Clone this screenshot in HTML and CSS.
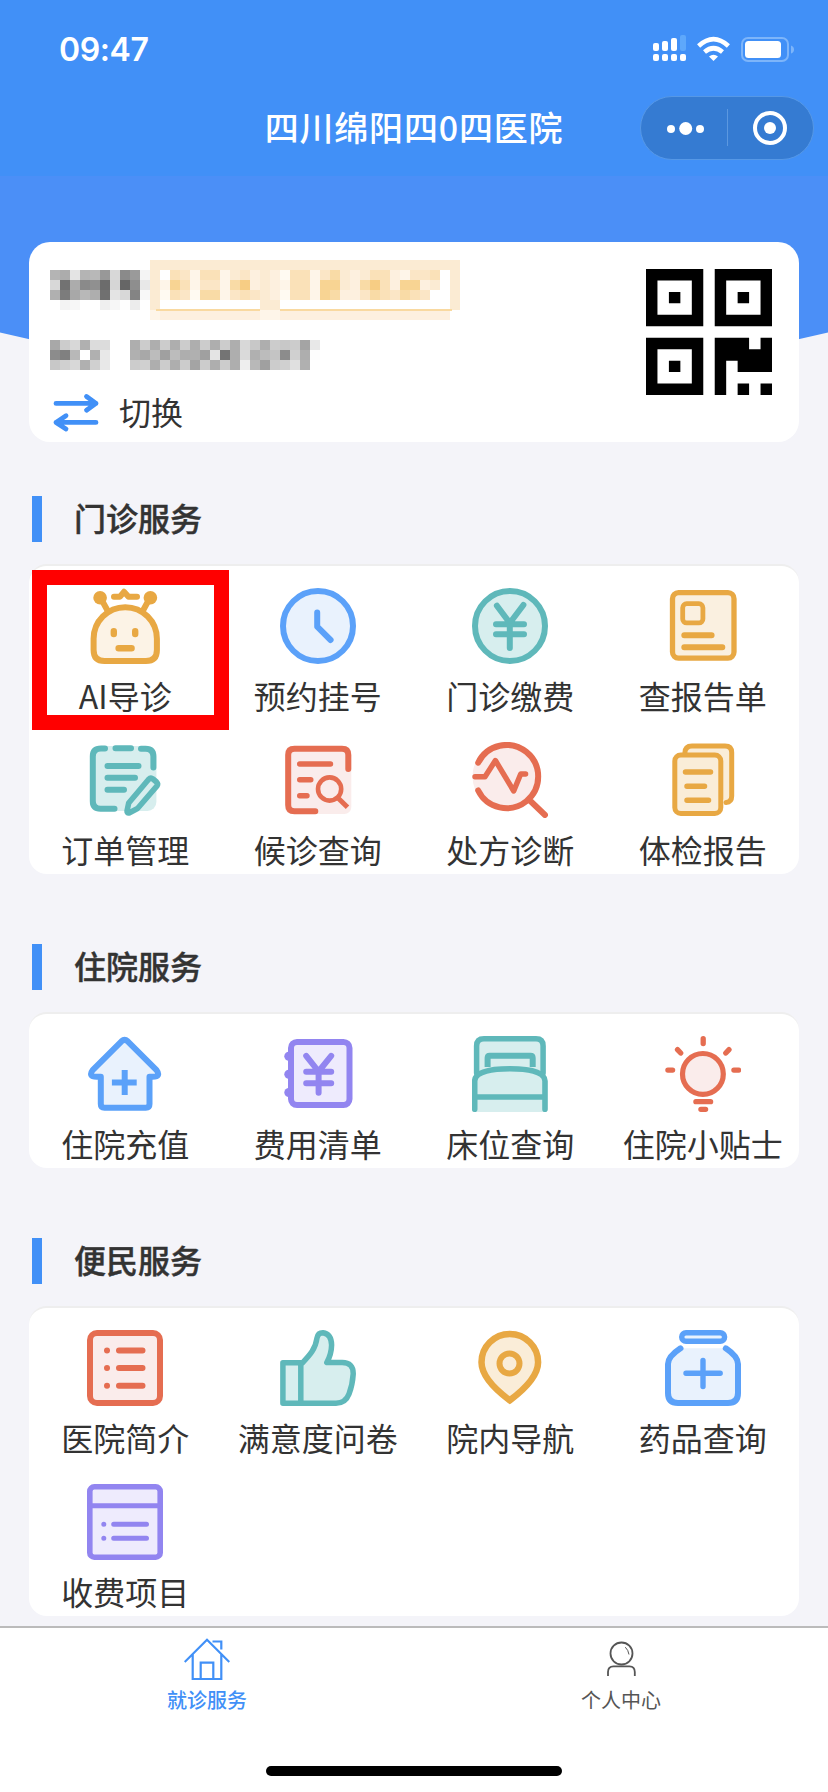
FILE: index.html
```html
<!DOCTYPE html>
<html lang="zh-CN">
<head>
<meta charset="utf-8">
<title>四川绵阳四0四医院</title>
<link rel="stylesheet" href="styles.css">
</head>
<body>
<div class="page">
  <header class="header">
    <div class="status-bar">
      <span class="time">09:47</span>
      <svg class="status-icons" width="142" height="28" viewBox="0 0 142 28">
        <g fill="#fff">
          <rect x="0" y="8" width="6" height="8" rx="2"/><rect x="9" y="6" width="6" height="10" rx="2"/><rect x="18" y="3" width="6" height="13" rx="2"/>
          <rect x="27" y="0" width="6" height="16" rx="2" fill="#5ea8fb"/>
          <rect x="0" y="19" width="6" height="7" rx="2"/><rect x="9" y="19" width="6" height="7" rx="2"/><rect x="18" y="19" width="6" height="7" rx="2"/><rect x="27" y="19" width="6" height="7" rx="2"/>
          <path d="M60.500 26 L56 21.500 Q60.500 18 65 21.500Z"/>
          <rect x="92" y="6" width="36" height="17" rx="3.500"/>
        </g>
        <g fill="none" stroke="#fff" stroke-width="4.600">
          <path d="M45.600 11 Q60.500 -2.600 75.400 11"/>
          <path d="M51.500 17 Q60.500 9.500 69.500 17"/>
        </g>
        <rect x="89" y="3" width="46" height="23" rx="6" fill="none" stroke="#7db5fa" stroke-width="2"/>
        <path d="M138 10.500 Q141 11.500 141 14.500 T138 18.500Z" fill="#7db5fa"/>
      </svg>
    </div>
    <div class="nav-bar">
      <h1 class="title">四川绵阳四0四医院</h1>
      <div class="capsule">
        <svg width="172" height="62" viewBox="0 0 172 62">
          <g fill="#fff"><circle cx="30" cy="32" r="4"/><circle cx="44.700" cy="31.500" r="6.500"/><circle cx="59" cy="32" r="4"/><circle cx="129" cy="31" r="6"/></g>
          <path d="M86.500 12V49" stroke="#5c98e0"/>
          <circle cx="129" cy="31" r="15" fill="none" stroke="#fff" stroke-width="4"/>
        </svg>
      </div>
    </div>
  </header>

  <section class="hero">
    <svg class="hero-bg" width="828" height="210" viewBox="0 0 828 210"><path d="M0 0H828V156.500Q414 255 0 156.500Z" fill="#4b8ff7"/></svg>
    <div class="patient">
      <div class="patient-info">
        <svg class="mosaic" id="mosaic" width="420" height="120" viewBox="0 0 420 120" shape-rendering="crispEdges"></svg>
        <div class="switch">
          <svg width="48" height="40" viewBox="0 0 48 40" fill="none" stroke="#4190f7" stroke-width="4.800" stroke-linecap="round" stroke-linejoin="round"><path d="M4 10.400H44M34.500 3.500L44 10.400L34.500 17.200M44 29.400H4M14 22.700L4 29.400L14 36"/></svg>
          <span>切换</span>
        </div>
      </div>
      <svg class="qr" width="126" height="126" viewBox="0 0 11 11">
        <path fill-rule="evenodd" d="M0 0H5V5H0ZM1 1V4H4V1ZM2 2H3V3H2ZM6 0H11V5H6ZM7 1V4H10V1ZM8 2H9V3H8ZM0 6H5V11H0ZM1 7V10H4V7ZM2 8H3V9H2ZM6 6H9V7H10V6H11V9H8V8H7V11H6ZM8 10H9V11H8ZM10 10H11V11H10Z"/>
      </svg>
    </div>
  </section>

  <main class="content">
    <section class="section">
      <h2 class="section-title">门诊服务</h2>
      <div class="grid">
        <a class="item">
          <svg class="icon orange" viewBox="0 0 76 76">
            <path fill="#fcf3e6" d="M6.600 50.800a31.650 31.650 0 0 1 63.300 0V62q0 11-11 11H17.600q-11 0-11-11z"/>
            <path d="M15 12.500L20.500 22.500M61.500 12.500L56 22.500M27 8.700H33L37 3.800L41.500 8.700H50" stroke-width="6"/>
            <g class="solid"><circle cx="13.100" cy="9.700" r="6.800"/><circle cx="63.400" cy="9.700" r="6.800"/></g>
            <path d="M26.800 43.200V46M48.200 43.200V46M31.600 60.300H44.600" stroke-width="6.400"/>
          </svg><span>AI导诊</span><div class="highlight"></div></a>
        <a class="item">
          <svg class="icon blue" viewBox="0 0 76 76"><circle class="tint" cx="38" cy="38" r="35"/><path d="M37.200 24.500V38.700L50.600 52"/></svg><span>预约挂号</span></a>
        <a class="item">
          <svg class="icon teal" viewBox="0 0 76 76"><circle class="tint" cx="38" cy="38" r="35"/><path d="M24.900 17.700L37.800 35L51.400 17M37.800 35V60M24 36.300H52M24 46.300H52"/></svg><span>门诊缴费</span></a>
        <a class="item">
          <svg class="icon orange" viewBox="0 0 76 76"><rect class="tint" x="7.500" y="4.700" width="61.500" height="65.400" rx="6" stroke-width="5.300"/><rect x="17.700" y="15.700" width="20.200" height="19.200" rx="4" stroke-width="4.800"/><path d="M19.300 47.300H46.600M19.300 59.300H57.300"/></svg><span>查报告单</span></a>
        <a class="item">
          <svg class="icon teal" viewBox="0 0 76 76"><rect class="tint bare" x="3" y="4" width="66.400" height="65" rx="9"/><path d="M18 6.600H14Q5.800 6.600 5.800 14.500V59Q5.800 66.700 13.500 66.700H27.500M28.500 6.300H44M54 6.700H58.500Q66.400 6.700 66.400 14.500V25.500M20.500 24H51.500M20.500 35.700H48M20.500 47.700H37"/><path class="tint" stroke-width="5.600" d="M41.700 61L61.500 37.500Q63.700 35.200 66 37L69.500 40Q71.500 42 69.800 44.200L50.500 66.500L42.500 70.800Q39.800 71.800 40 69Z"/></svg><span>订单管理</span></a>
        <a class="item">
          <svg class="icon red" viewBox="0 0 76 76"><rect class="tint bare" x="5" y="4" width="66.300" height="68" rx="7"/><path d="M68.300 27V13Q68.300 6.700 62 6.700H14.500Q8.200 6.700 8.200 13V63Q8.200 69.300 14.500 69.300H35.300"/><path stroke-width="5.400" d="M19.700 22H50.500M19.700 37.700H30.800M19.700 53.700H27"/><circle cx="49.600" cy="47" r="11.600" stroke-width="4.600"/><path d="M57.500 55.500L67.500 65.300" stroke-width="5" stroke-linecap="butt"/></svg><span>候诊查询</span></a>
        <a class="item">
          <svg class="icon red" viewBox="0 0 76 76"><circle class="tint bare" cx="34.800" cy="34.500" r="34.300"/><path d="M6.200 20.700A31.600 31.600 0 1 1 6.200 48.500M58.400 59L73 73"/><path stroke-width="5.400" d="M3 34.700H13L23.400 18.500L41.700 49L48.700 32H53.600"/></svg><span>处方诊断</span></a>
        <a class="item">
          <svg class="icon orange" viewBox="0 0 76 76"><path stroke-width="5" fill="#faedd8" d="M19.900 13V11Q19.900 3.900 27 3.900H60Q66.700 3.900 66.700 10.500V54Q66.700 60 61 60.500"/><rect stroke-width="5" fill="#faedd8" x="9.800" y="12.900" width="46" height="58.500" rx="6"/><path stroke-width="5.500" d="M20.500 30H45.500M22 44.200H39.500M22 58.300H43.500"/></svg><span>体检报告</span></a>
      </div>
    </section>

    <section class="section">
      <h2 class="section-title">住院服务</h2>
      <div class="grid">
        <a class="item">
          <svg class="icon blue" viewBox="0 0 76 76"><path class="tint" d="M34.500 5.300Q37.600 2.600 40.700 5.300L69.300 33.800Q74.500 40.700 65.500 40.700H62.500V68q0 3.700-3.700 3.700H17.500q-3.700 0-3.700-3.700V40.700H9.800Q.7 40.700 5.900 33.800Z"/><path d="M37.700 34V59M24.900 46.500H49.700" stroke-linecap="butt"/></svg><span>住院充值</span></a>
        <a class="item">
          <svg class="icon purple" viewBox="0 0 76 76"><g class="solid"><circle cx="8.800" cy="20.300" r="4.500"/><circle cx="8.800" cy="38.300" r="4.500"/><circle cx="8.800" cy="56.500" r="4.500"/></g><rect class="tint" x="11" y="5.900" width="58.500" height="63.200" rx="6"/><path d="M26.200 19.900L38.600 35.500L51.200 19.900M38.600 35.500V56.800M26.200 35.700H51.200M26.200 47.300H51.200"/></svg><span>费用清单</span></a>
        <a class="item">
          <svg class="icon teal" viewBox="0 0 76 76"><path class="tint" stroke-width="5.500" d="M4.600 37V10Q4.600 2.800 12 2.800H64Q71.100 2.800 71.100 10V37"/><path d="M15.600 31V22Q15.600 19.800 17.800 19.800H58.500Q60.700 19.800 60.700 22V31" stroke-linecap="butt"/><path class="tint bare" d="M3 76V44Q8 33 38 33T73 44V76Z"/><path stroke-width="5.600" d="M2.700 73.200V45C3 35 22 32.800 37.900 32.800S72.800 35 73 45V73.200M3 61H73"/></svg><span>床位查询</span></a>
        <a class="item">
          <svg class="icon red" viewBox="0 0 76 76"><circle class="tint" cx="37.900" cy="37.900" r="20.400" stroke-width="5.200"/><path stroke-width="5.300" d="M38.200 2.700V7.500M2.900 34.100H7.600M68.900 34.100H73.600M12.500 13.600L15.700 17M64 13.600L60.800 17M30.900 65.700H45.600M35.900 73.300H40.600"/></svg><span>住院小贴士</span></a>
      </div>
    </section>

    <section class="section">
      <h2 class="section-title">便民服务</h2>
      <div class="grid">
        <a class="item">
          <svg class="icon red" viewBox="0 0 76 76"><rect class="tint" x="3" y="3" width="70" height="70" rx="7"/><path d="M20 20.400H20.010M20 38H20.010M20 55.700H20.010M32 20.400H55.500M32 38H55.500M32 55.700H55.500"/></svg><span>医院简介</span></a>
        <a class="item">
          <svg class="icon teal" viewBox="0 0 76 76"><path class="tint" stroke-width="5.500" d="M2.900 73.200V32.800H22.500C30 25 35.500 19 37 8Q38 2.700 43 2.800Q51.300 4 51.600 15Q51.500 24 46.800 32.600H62Q73.500 32.500 73.200 44Q72.500 55 69 64Q65.500 73.200 56 73.200ZM20.800 33V73"/></svg><span>满意度问卷</span></a>
        <a class="item">
          <svg class="icon orange" viewBox="0 0 76 76"><path fill="#faedd8" stroke-linejoin="miter" stroke-width="6.500" d="M37.800 70.300C20 57 9.500 45 9.500 32.200a28.300 28.300 0 0 1 56.600 0C66.100 45 55.500 57 37.800 70.300z"/><circle cx="37.500" cy="33.500" r="10"/></svg><span>院内导航</span></a>
        <a class="item">
          <svg class="icon blue" viewBox="0 0 76 76"><path class="tint" d="M15.500 18.300Q3 26.500 3 34V63q0 10 10 10H63q10 0 10-10V34Q73 26.500 60.800 18.300"/><rect class="tint" x="16.700" y="2.700" width="42.900" height="8.600" rx="4.300" stroke-width="5.400"/><path stroke-width="5.400" d="M38 30.500V56.500M21 43.200H55.200"/></svg><span>药品查询</span></a>
        <a class="item">
          <svg class="icon purple" viewBox="0 0 76 76"><rect class="tint" x="2.800" y="2.800" width="70.400" height="70.400" rx="4.500" stroke-width="5.600"/><path stroke-width="5" d="M3 21.700H73M16.800 40.200H16.810M16.800 54.200H16.810M26.700 40.200H59.500M26.700 54.200H59.500"/></svg><span>收费项目</span></a>
      </div>
    </section>
  </main>

  <footer class="footer">
    <nav class="tabs">
      <a class="tab active">
        <svg width="46" height="46" viewBox="0 0 46 46" fill="none" stroke="currentColor" stroke-width="2.200"><path d="M.7 25L23 2.800L45.300 25M8.700 17.500V42H37.300V17.500M16.700 41V25.700H29.300V41M28.500 4.500H37.300V12.500"/></svg>
        <span>就诊服务</span>
      </a>
      <a class="tab">
        <svg width="46" height="46" viewBox="0 0 46 46" fill="none" stroke="currentColor" stroke-width="1.800"><circle cx="23.500" cy="16.500" r="11"/><path d="M10 39V35Q10 29.300 15.500 29.300H31.500Q36.800 29.300 36.800 35V39"/><path d="M27.300 10.200Q30.300 13 31 17.500" stroke-width="1"/></svg>
        <span>个人中心</span>
      </a>
    </nav>
    <div class="home-indicator"></div>
  </footer>
</div>
<script src="mosaic.js"></script>
</body>
</html>
```
FILE: styles.css
```css
* { box-sizing: border-box; }

body {
  margin: 0;
  background: #f4f4f9;
  color: #333;
  font-family: "Noto Sans CJK SC", sans-serif;
}

svg { display: block; flex: none; }

.page {
  display: flex;
  flex-direction: column;
  width: 828px;
  height: 1792px;
  overflow: hidden;
}

.header {
  height: 176px;
  background: #4190f7;
  color: #fff;
}

.status-bar {
  display: flex;
  justify-content: space-between;
  align-items: flex-start;
  height: 96px;
  padding: 35px 33px 0 59px;
}

.time {
  font: 600 32px/30px Inter, sans-serif;
  letter-spacing: -0.4px;
}

.nav-bar {
  display: grid;
  grid-template-columns: 188px 1fr 174px;
  align-items: center;
  height: 64px;
  padding: 0 14px;
}

.title {
  grid-column: 2;
  margin: 0;
  padding: 0 14px 2px 0;
  text-align: center;
  white-space: nowrap;
  font-size: 34px;
  font-weight: 500;
  line-height: 62px;
  letter-spacing: 0.8px;
}

.capsule {
  height: 64px;
  border: 1px solid #5698e6;
  border-radius: 32px;
  background: #357bd2;
}

.hero {
  position: relative;
  padding: 66px 29px 0;
}

.hero-bg {
  position: absolute;
  top: 0;
  left: 0;
}

.patient {
  position: relative;
  display: flex;
  justify-content: space-between;
  height: 200px;
  padding: 18px 27px 0 21px;
  border-radius: 21px;
  background: #fff;
}

.switch {
  display: flex;
  align-items: center;
  gap: 19px;
  height: 46px;
  margin-top: 10px;
  padding-left: 2px;
  font-size: 32px;
  line-height: 46px;
}

.switch span { padding-bottom: 5px; }

.qr { margin-top: 9px; }

.content {
  display: flex;
  flex-direction: column;
  gap: 70px;
  padding: 54px 29px 0;
}

.section-title {
  height: 46px;
  margin: 0 0 22px 3px;
  padding-left: 32px;
  border-left: 10px solid #4190f7;
  font-size: 32px;
  font-weight: 500;
  line-height: 42px;
  -webkit-text-stroke: 0.4px;
}

.grid {
  display: grid;
  grid-template-columns: repeat(4, 1fr);
  grid-auto-rows: 154px;
  border-top: 2px solid #eee;
  border-radius: 18px;
  background: #fff;
}

.item {
  position: relative;
  display: flex;
  flex-direction: column;
  align-items: center;
  gap: 10px;
  padding-top: 22px;
  font-size: 32px;
  line-height: 42px;
  white-space: nowrap;
}

.highlight {
  position: absolute;
  top: 4px;
  left: 3px;
  width: 197px;
  height: 160px;
  border: 15px solid #f00;
}

.icon {
  width: 76px;
  height: 76px;
  fill: none;
  stroke: var(--line);
  stroke-width: 6;
  stroke-linecap: round;
  stroke-linejoin: round;
}

.icon .tint { fill: var(--tint); }
.icon .bare { stroke: none; }
.icon .solid { fill: var(--line); stroke: none; }

.orange { --line: #e8a843; --tint: #faf0e0; }
.blue { --line: #5ba1f9; --tint: #e9f2fd; }
.teal { --line: #5fb8ba; --tint: #d7eeee; }
.red { --line: #e56d51; --tint: #faeceb; }
.purple { --line: #9285f0; --tint: #eeebfd; }

.footer {
  display: flex;
  flex-direction: column;
  align-items: center;
  justify-content: space-between;
  height: 166px;
  margin-top: auto;
  padding-bottom: 16px;
  border-top: 2px solid #bbb;
  background: #fff;
}

.tabs {
  display: flex;
  width: 100%;
  padding-top: 9px;
}

.tab {
  flex: 1;
  display: flex;
  flex-direction: column;
  align-items: center;
  color: #555;
  font-size: 20px;
  line-height: 33px;
}

.tab.active {
  color: #4190f7;
  font-weight: 500;
}

.home-indicator {
  width: 296px;
  height: 10px;
  border-radius: 5px;
  background: #000;
}
```
FILE: mosaic.js
```js
// Pixelated privacy mask over the patient's name, tags and number.
// Each row lists one colour per 10px cell: two hex digits for a grey.
const svg = document.getElementById("mosaic");
function cell(x, y, w, h, fill) {
  const r = document.createElementNS("http://www.w3.org/2000/svg", "rect");
  Object.entries({ x, y, width: w, height: h, fill }).forEach(([k, v]) => r.setAttribute(k, v));
  svg.appendChild(r);
}
function greys(x, y, row) {
  row.split(" ").forEach((g, i) => cell(x + i * 10, y, 10, 10, "#" + g + g + g));
}
greys(0, 10, "b4 ac e4 b4 b8 98 d8 8a 9a f4");
greys(0, 20, "d8 72 ac 8a 90 6c d6 66 8e e8");
greys(0, 30, "b0 7c a8 b8 ae 70 e4 d8 84 f8");
greys(0, 40, "ff f3 f7 ff ff ef f7 fe ec ff");
greys(0, 80, "a8 cc d8 b0 dc dc");
greys(0, 90, "8c 80 b8 ff b0 e8");
greys(0, 100, "c8 d0 d8 b0 d0 e8");
greys(80, 80, "ae cc ae cc ae cc ae cc ae cc ae d8 c8 ae cc c8 cc a4 e8");
greys(80, 90, "b0 a8 bc a0 bc ae b0 a0 e4 74 ae da b0 bc c4 8c d0 ae fd");
greys(80, 100, "cc d0 ae cc ae cc a4 cc ae cc ae ee b8 a0 cc d0 e0 b0");

// Tag tints run from white (0) to the deepest amber (9).
const amber = ["#fff", "#fffaf2", "#fef5e9", "#fdf0df", "#fbebd3", "#fbe6c6", "#fae1b8", "#f9dba6", "#f8d493", "#f7cd84"];
[
  [0, "4444444444444444444444444444444"],
  [10, "4065266245343166257434663255664"],
  [20, "4286255279343266288437963883454"],
  [30, "4165177256543166287335765765004"],
  [40, "4000000000044000000000000000004"],
  [50, "2333333333322333333333333333330"]
].forEach(([y, row]) => [...row].forEach((n, i) => cell(100 + i * 10, y, 10, 10, amber[n])));
cell(390, 10, 10, 10, "#fff");
cell(390, 20, 10, 10, "#fff");
cell(106, 49, 104, 2, "#f9d9a0");
cell(230, 49, 172, 2, "#f9d9a0");
```
